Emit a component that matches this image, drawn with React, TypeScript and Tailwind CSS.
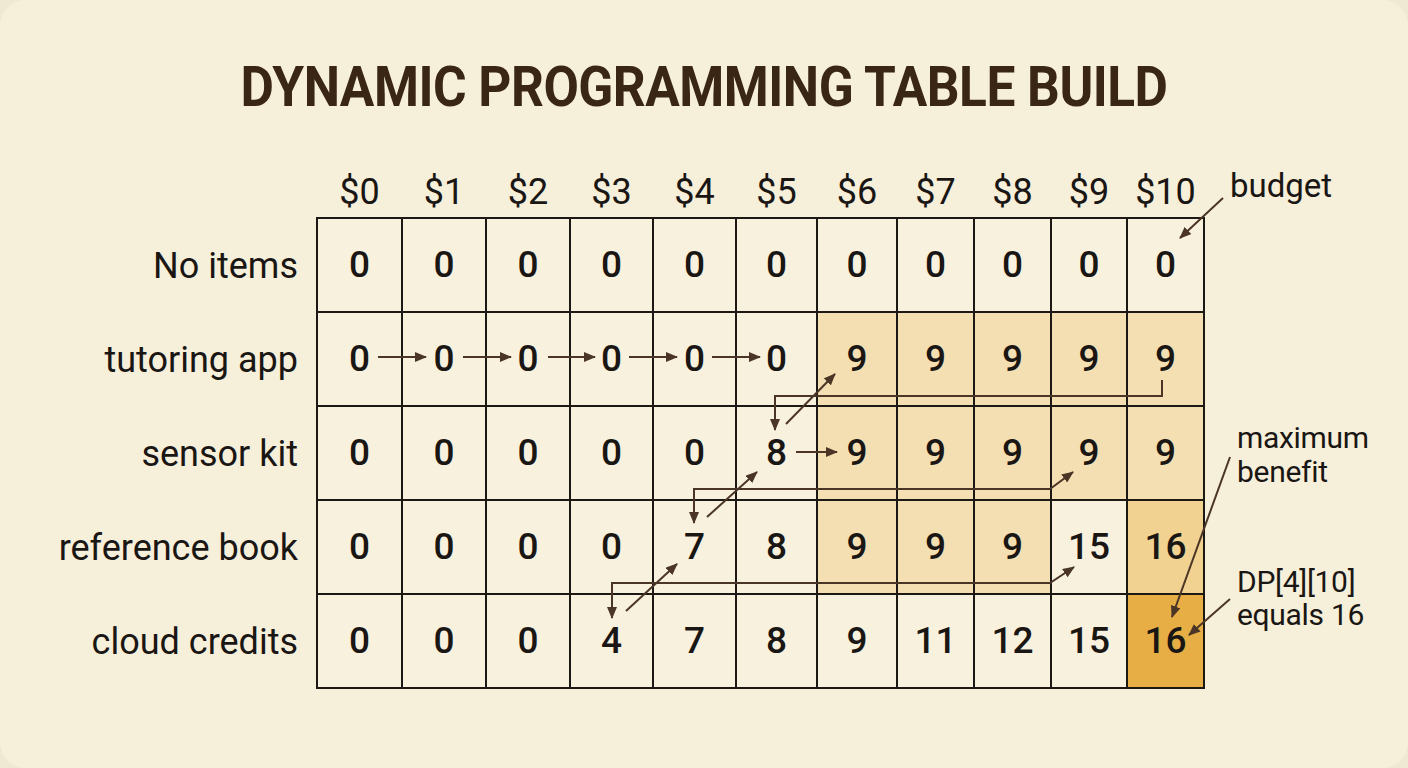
import React from 'react'

type Tone = 'plain' | 'hl' | 'mid' | 'max'

const budgets = ['$0', '$1', '$2', '$3', '$4', '$5', '$6', '$7', '$8', '$9', '$10']

const rows: { label: string; vals: number[]; tones: Tone[] }[] = [
  { label: 'No items', vals: [0, 0, 0, 0, 0, 0, 0, 0, 0, 0, 0], tones: [] },
  {
    label: 'tutoring app',
    vals: [0, 0, 0, 0, 0, 0, 9, 9, 9, 9, 9],
    tones: ['plain', 'plain', 'plain', 'plain', 'plain', 'plain', 'hl', 'hl', 'hl', 'hl', 'hl'],
  },
  {
    label: 'sensor kit',
    vals: [0, 0, 0, 0, 0, 8, 9, 9, 9, 9, 9],
    tones: ['plain', 'plain', 'plain', 'plain', 'plain', 'plain', 'hl', 'hl', 'hl', 'hl', 'hl'],
  },
  {
    label: 'reference book',
    vals: [0, 0, 0, 0, 7, 8, 9, 9, 9, 15, 16],
    tones: ['plain', 'plain', 'plain', 'plain', 'plain', 'plain', 'hl', 'hl', 'hl', 'plain', 'mid'],
  },
  {
    label: 'cloud credits',
    vals: [0, 0, 0, 4, 7, 8, 9, 11, 12, 15, 16],
    tones: ['plain', 'plain', 'plain', 'plain', 'plain', 'plain', 'plain', 'plain', 'plain', 'plain', 'max'],
  },
]

const toneClass: Record<Tone, string> = {
  plain: 'bg-[#f8f1de]',
  hl: 'bg-[#f4dfb3]',
  mid: 'bg-[#f1d291]',
  max: 'bg-[#e7ae45]',
}

const COLS = 'grid-cols-[85px_84px_84px_83px_83px_81px_80px_77px_77px_76px_77px]'

// arrows drawn over the table, page coords
function Arrows() {
  const c = '#4a3527'
  return (
    <svg className="absolute inset-0 pointer-events-none" width={1408} height={768}>
      <defs>
        <marker
          id="ah"
          viewBox="0 0 12 10"
          refX="11"
          refY="5"
          markerWidth="12"
          markerHeight="10"
          markerUnits="userSpaceOnUse"
          orient="auto-start-reverse"
        >
          <path d="M0,0 L12,5 L0,10 z" fill={c} />
        </marker>
      </defs>
      <g stroke={c} strokeWidth={2} fill="none">
        {[
          [378, 426],
          [463, 511],
          [548, 595],
          [629, 677],
          [712, 760],
        ].map(([a, b]) => (
          <line key={a} x1={a} y1={357} x2={b} y2={357} markerEnd="url(#ah)" />
        ))}
        <line x1={796} y1={452} x2={837} y2={452} markerEnd="url(#ah)" />
        <polyline points="1162,380 1162,396 775,396 775,430" markerEnd="url(#ah)" />
        <line x1={786} y1={424} x2={835} y2={374} markerEnd="url(#ah)" />
        <polyline points="694,523 694,489 1050,489 1073,472" markerStart="url(#ah)" markerEnd="url(#ah)" />
        <line x1={707} y1={517} x2={757} y2={472} markerEnd="url(#ah)" />
        <polyline points="612,618 612,583 1050,583 1074,567" markerStart="url(#ah)" markerEnd="url(#ah)" />
        <line x1={626} y1={611} x2={677} y2={564} markerEnd="url(#ah)" />
        <line x1={1223} y1={198} x2={1180} y2={238} markerEnd="url(#ah)" />
        <line x1={1230} y1={457} x2={1172} y2={617} markerEnd="url(#ah)" />
        <line x1={1230} y1={599} x2={1189} y2={635} markerEnd="url(#ah)" />
      </g>
    </svg>
  )
}

export default function App() {
  return (
    <div className="w-[1408px] h-[768px] bg-[#efe8d2] font-['Roboto',sans-serif] text-[#1a1613]">
      <div className="relative w-full h-full rounded-[26px] bg-[#f6efda] overflow-hidden">
        <h1 className="pt-[60px] text-center text-[55px] leading-none font-bold text-[#3a2615] tracking-[-0.01em] scale-x-[0.935]">
          DYNAMIC PROGRAMMING TABLE BUILD
        </h1>

        <div className="mt-[50px] flex">
          {/* row labels */}
          <div className="w-[316px] flex flex-col pt-[54px]">
            {rows.map((r) => (
              <div key={r.label} className="h-[94px] flex items-center justify-end pr-[18px] text-[36px]">
                {r.label}
              </div>
            ))}
          </div>

          <div className="flex flex-col">
            <div className={`grid ${COLS} h-[52px]`}>
              {budgets.map((b) => (
                <div key={b} className="flex items-center justify-center text-[36px] pl-[2px] pb-[2px]">
                  {b}
                </div>
              ))}
            </div>
            <div className={`grid ${COLS} border-t-2 border-l-2 border-[#1c1814]`}>
              {rows.map((r, ri) =>
                r.vals.map((v, ci) => (
                  <div
                    key={`${ri}-${ci}`}
                    className={`h-[94px] border-r-2 border-b-2 border-[#1c1814] flex items-center justify-center text-[37px] font-medium ${toneClass[r.tones[ci] ?? 'plain']}`}
                  >
                    {v}
                  </div>
                ))
              )}
            </div>
          </div>
        </div>

        <div className="absolute left-[1230px] top-[166px] text-[33px] leading-[40px]">budget</div>
        <div className="absolute left-[1237px] top-[421px] text-[30px] leading-[34px] tracking-[-0.01em]">
          maximum
          <br />
          benefit
        </div>
        <div className="absolute left-[1237px] top-[565px] text-[30px] leading-[33px] tracking-[-0.01em]">
          DP[4][10]
          <br />
          equals 16
        </div>

        <Arrows />
      </div>
    </div>
  )
}
